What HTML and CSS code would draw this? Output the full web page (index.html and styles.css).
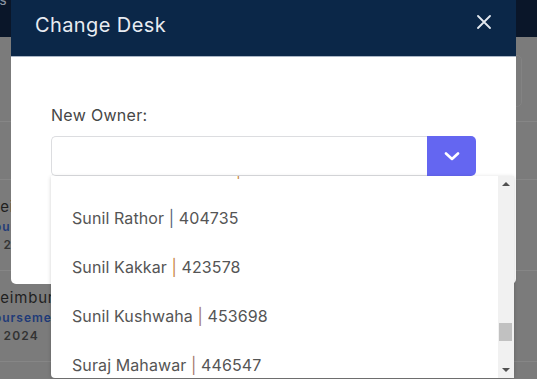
FILE: index.html
```html
<!DOCTYPE html>
<html lang="en">
<head>
	<meta charset="UTF-8">
	<title>Change Desk</title>
<link rel="stylesheet" href="styles.css">
</head>
<body>
	<div class="app">
		<div class="topbar"><span class="topbar-title">Claims</span></div>
		<div class="rows">
			<div class="row row-head"><span class="side-card"></span></div>
			<div class="row row-filter"></div>
			<div class="row claim">
				<div class="claim-title">Reimbursement</div>
				<div class="claim-type">Reimbursement</div>
				<div class="claim-date">Mar 2024</div>
			</div>
			<div class="row claim">
				<div class="claim-title">Reimbursement</div>
				<div class="claim-type">Reimbursement</div>
				<div class="claim-date">Mar 2024</div>
			</div>
		</div>
	</div>

	<div class="modal">
		<div class="modal-header">
			<h2>Change Desk</h2>
			<button class="close" type="button">
				<svg width="14" height="14" viewBox="0 0 14 14"><path d="M1 1L13 13M13 1L1 13" stroke="#e4e9f0" stroke-width="1.8" stroke-linecap="round"/></svg>
			</button>
		</div>
		<div class="modal-body">
			<label class="field-label">New Owner:</label>
			<div class="select">
				<div class="select-input"></div>
				<button class="select-toggle" type="button">
					<svg width="16" height="9" viewBox="0 0 16 9"><path d="M2 1.5L8 7L14 1.5" fill="none" stroke="#fff" stroke-width="2.6" stroke-linecap="round" stroke-linejoin="round"/></svg>
				</button>
			</div>
		</div>
	</div>

	<div class="dropdown">
		<div class="options-view">
			<ul class="options">
				<li>Sunil Kumar Chandel <span class="pipe pipe-warm">|</span> 418826</li>
				<li>Sunil Rathor <span class="pipe">|</span> 404735</li>
				<li>Sunil Kakkar <span class="pipe pipe-warm">|</span> 423578</li>
				<li>Sunil Kushwaha <span class="pipe pipe-red">|</span> 453698</li>
				<li>Suraj Mahawar <span class="pipe pipe-red">|</span> 446547</li>
			</ul>
		</div>
		<div class="scrollbar">
			<div class="scroll-btn"><span class="arrow-up"></span></div>
			<div class="scroll-track"><div class="scroll-thumb"></div></div>
			<div class="scroll-btn"><span class="arrow-down"></span></div>
		</div>
	</div>
</body>
</html>
```

FILE: styles.css
```css
html,body,div,ul,li,h2,button{padding: 0;margin: 0;}
li{list-style: none;}
html,body{
	width: 537px;
	height: 379px;
	overflow: hidden;
}
body{
	font-family: Inter, "Liberation Sans", sans-serif;
	background: #7b7b7b;
	position: relative;
}

/* page behind the overlay */
.topbar{
	height: 37px;
	background: #0a1629;
	overflow: hidden;
}
.topbar-title{
	display: block;
	margin: -9px 0 0 -38px;
	font-size: 14px;
	color: #8d96a3;
}
.row{
	border-bottom: 1px solid #868686;
	box-sizing: border-box;
}
.row-head{
	height: 85px;
	padding-top: 18px;
}
.side-card{
	display: block;
	width: 40px;
	height: 50px;
	margin-left: 480px;
	border: 1px solid #838383;
	border-radius: 5px;
}
.row-filter{height: 58px;}
.claim{
	height: 91px;
	padding-top: 17px;
}
.claim-title{
	margin-left: -10px;
	font-size: 15px;
	line-height: 20px;
	color: #1f1f1f;
	letter-spacing: 0.8px;
}
.claim-type{
	margin-left: -39px;
	font-size: 12px;
	line-height: 20px;
	font-weight: 600;
	letter-spacing: 1px;
	color: #203a78;
}
.claim-date{
	margin-left: -27px;
	font-size: 12px;
	line-height: 15px;
	font-weight: 600;
	letter-spacing: 1.2px;
	color: #333;
}

/* modal */
.modal{
	position: absolute;
	left: 11px;
	top: 0;
	width: 505px;
	height: 284px;
	background: #fff;
	border-radius: 0 0 5px 5px;
}
.modal-header{
	height: 56px;
	background: #0b2748;
	border-bottom: 1px solid #aab6c6;
	display: flex;
	align-items: center;
	justify-content: space-between;
	padding: 0 25px 0 24px;
}
.modal-header h2{
	font-size: 20px;
	font-weight: 400;
	letter-spacing: 0.4px;
	color: #e8ecf2;
	margin-top: -7px;
}
.close{
	border: 0;
	background: none;
	width: 14px;
	height: 14px;
	margin-top: -12px;
	display: flex;
}
.modal-body{
	padding: 46px 40px 0;
}
.field-label{
	display: block;
	font-size: 16px;
	line-height: 24px;
	letter-spacing: 0.3px;
	color: #464646;
	margin-bottom: 9px;
}
.select{
	display: flex;
	height: 40px;
}
.select-input{
	flex: 1;
	border: 1px solid #dcdde0;
	border-right: 0;
	border-radius: 5px 0 0 5px;
}
.select-toggle{
	width: 49px;
	border: 0;
	background: #6466f1;
	border-radius: 0 5px 5px 0;
	display: flex;
	align-items: center;
	justify-content: center;
}

/* open list */
.dropdown{
	position: absolute;
	left: 51px;
	top: 176px;
	width: 463px;
	height: 202px;
	background: #fff;
	display: flex;
	box-shadow: 0 1px 4px rgba(0,0,0,0.18);
	border-radius: 0 0 4px 4px;
}
.options-view{
	flex: 1;
	overflow: hidden;
}
.options{
	margin-top: -31px;
}
.options li{
	height: 49px;
	line-height: 49px;
	padding-left: 21px;
	font-size: 16px;
	letter-spacing: 0.1px;
	color: #555;
}
.pipe{color: #56657a;}
.pipe-warm{color: #c98a48;}
.pipe-red{color: #a5786c;}
.scrollbar{
	width: 16px;
	background: #f1f1f1;
	display: flex;
	flex-direction: column;
}
.scroll-btn{
	height: 16px;
	display: flex;
	align-items: center;
	justify-content: center;
}
.arrow-up{
	border-left: 4px solid transparent;
	border-right: 4px solid transparent;
	border-bottom: 4px solid #505050;
}
.arrow-down{
	border-left: 4px solid transparent;
	border-right: 4px solid transparent;
	border-top: 4px solid #505050;
}
.scroll-track{
	flex: 1;
	padding-top: 131px;
}
.scroll-thumb{
	height: 18px;
	margin: 0 2px 0 1px;
	background: #c1c1c1;
}
```
